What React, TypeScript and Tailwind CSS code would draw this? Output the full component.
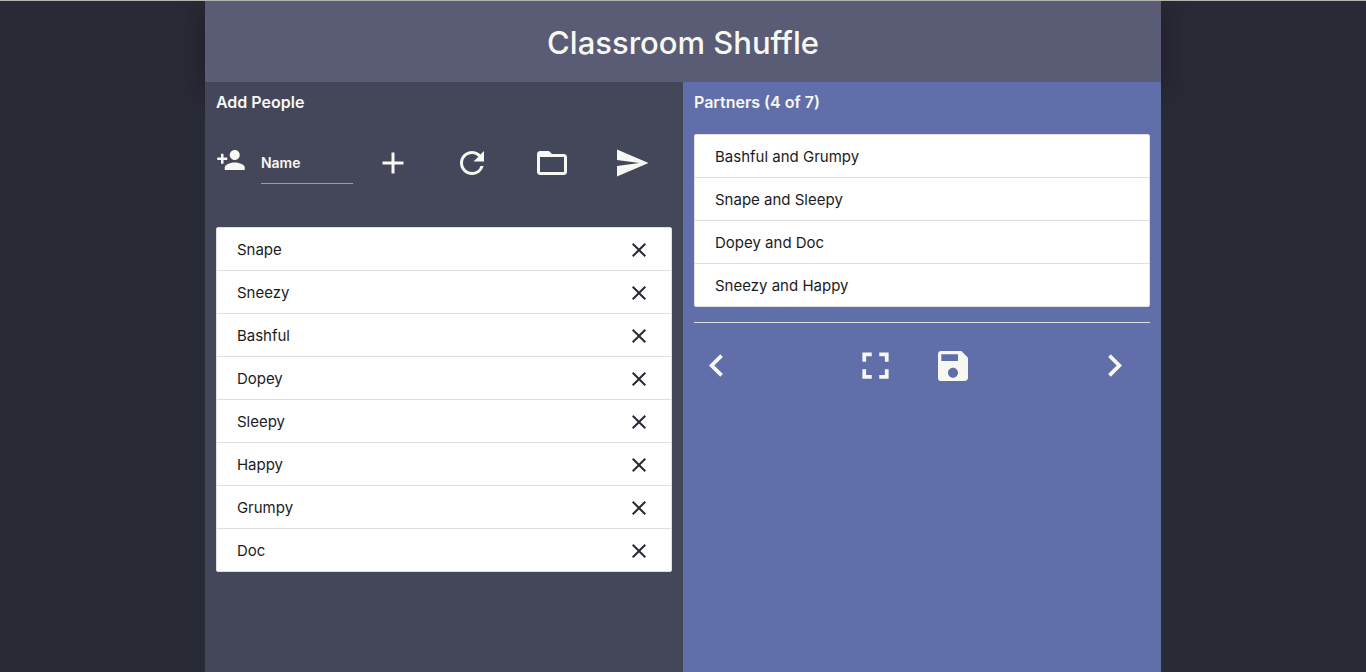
import { useState, type FormEvent, type ReactNode } from "react";
import {
  MdAdd,
  MdChevronLeft,
  MdChevronRight,
  MdClose,
  MdFolderOpen,
  MdFullscreen,
  MdPersonAdd,
  MdRefresh,
  MdSave,
  MdSend,
} from "react-icons/md";

const initialPeople = ["Snape", "Sneezy", "Bashful", "Dopey", "Sleepy", "Happy", "Grumpy", "Doc"];

const partners = ["Bashful and Grumpy", "Snape and Sleepy", "Dopey and Doc", "Sneezy and Happy"];

function ToolButton({ label, submit, children }: { label: string; submit?: boolean; children: ReactNode }) {
  return (
    <button
      type={submit ? "submit" : "button"}
      aria-label={label}
      className="flex flex-1 cursor-pointer justify-center text-4xl"
    >
      {children}
    </button>
  );
}

function NavButton({ label, children }: { label: string; children: ReactNode }) {
  return (
    <button type="button" aria-label={label} className="flex cursor-pointer items-center text-[45px]">
      {children}
    </button>
  );
}

function Collection({ children }: { children: ReactNode }) {
  return (
    <ul className="divide-y divide-[#e0e0e0] overflow-hidden rounded-xs border border-[#e0e0e0] bg-white text-[15px] leading-[22px] text-[#1c1c1c]">
      {children}
    </ul>
  );
}

export default function App() {
  const [people, setPeople] = useState(initialPeople);
  const [name, setName] = useState("");

  const addPerson = (event: FormEvent) => {
    event.preventDefault();
    if (!name.trim()) return;
    setPeople([...people, name.trim()]);
    setName("");
  };

  return (
    <div className="flex min-h-screen flex-col overflow-hidden border-t border-[#b4b5ae] bg-[#282a36] font-['Inter','Liberation_Sans',sans-serif] text-[#f8f8f2]">
      <div className="mx-auto flex w-[70%] flex-1 flex-col">
        <header className="bg-[#5a5c76] pt-[18px] pb-4 text-center shadow-[0_8px_25px_rgba(28,16,28,0.5)]">
          <h1 className="text-[31px] leading-[47px] font-medium">Classroom Shuffle</h1>
        </header>

        <main className="relative grid flex-1 grid-cols-2">
          <section className="bg-[#44475a] px-[11px] pt-2">
            <h2 className="text-base leading-6 font-semibold">Add People</h2>

            <form onSubmit={addPerson} className="mt-[31px] mb-[43px] flex">
              <div className="flex w-[30%] gap-[15px]">
                <label htmlFor="person-name" className="text-3xl">
                  <MdPersonAdd aria-hidden="true" />
                </label>
                <input
                  id="person-name"
                  type="text"
                  aria-label="Name"
                  placeholder="Name"
                  value={name}
                  onChange={(event) => setName(event.target.value)}
                  className="h-[39px] min-w-0 flex-1 border-b border-[#9e9e9e] bg-transparent pb-1 text-[14px] font-semibold outline-none placeholder:text-[#f8f8f2]"
                />
              </div>
              <ToolButton label="Add person" submit>
                <MdAdd />
              </ToolButton>
              <ToolButton label="Reset">
                <MdRefresh />
              </ToolButton>
              <ToolButton label="Open saved list">
                <MdFolderOpen />
              </ToolButton>
              <ToolButton label="Shuffle">
                <MdSend />
              </ToolButton>
            </form>

            <Collection>
              {people.map((person) => (
                <li key={person} className="flex items-center justify-between px-5 pt-[11px] pb-[9px]">
                  {person}
                  <button
                    type="button"
                    aria-label={`Remove ${person}`}
                    onClick={() => setPeople(people.filter((other) => other !== person))}
                    className="-my-1 cursor-pointer text-2xl text-[#282a36]"
                  >
                    <MdClose />
                  </button>
                </li>
              ))}
            </Collection>
          </section>

          <section className="bg-[#606fa9] px-[11px] pt-2">
            <h2 className="mb-5 text-base leading-6 font-semibold">Partners (4 of 7)</h2>

            <Collection>
              {partners.map((pair) => (
                <li key={pair} className="px-5 pt-[11px] pb-[9px]">
                  {pair}
                </li>
              ))}
            </Collection>

            <nav
              aria-label="Partner sets"
              className="mt-[15px] grid grid-cols-6 gap-x-[22px] border-t border-[#e0e0e0] pt-5"
            >
              <NavButton label="Previous partners">
                <MdChevronLeft />
              </NavButton>
              <span />
              <NavButton label="Full screen">
                <MdFullscreen />
              </NavButton>
              <button type="button" aria-label="Save partners" className="flex cursor-pointer items-center text-[40px]">
                <MdSave />
              </button>
              <span />
              <NavButton label="Next partners">
                <MdChevronRight />
              </NavButton>
            </nav>
          </section>
        </main>
      </div>
    </div>
  );
}
